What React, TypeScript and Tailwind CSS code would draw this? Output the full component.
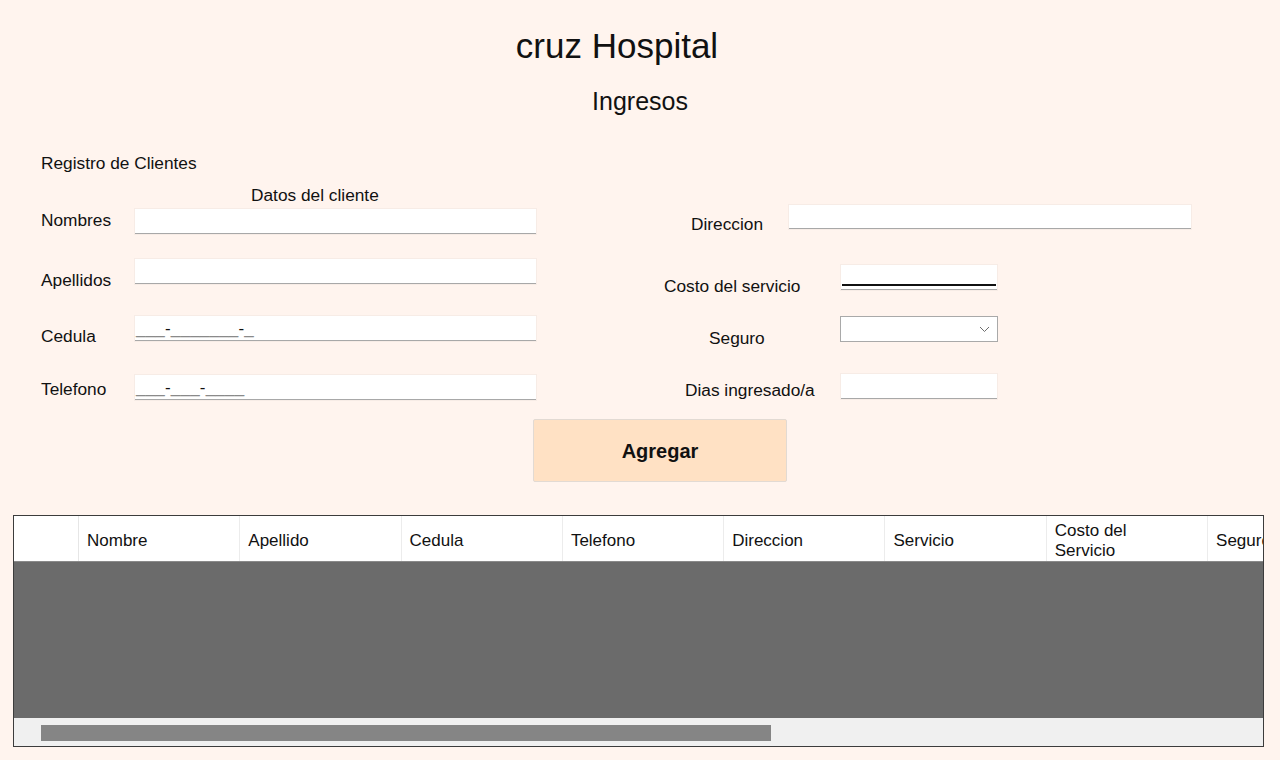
import React from "react";

const columns = ["Nombre", "Apellido", "Cedula", "Telefono", "Direccion", "Servicio", "Costo del Servicio", "Seguro"];

function TextBox({ className = "", children }: { className?: string; children?: React.ReactNode }) {
  return (
    <div className={`bg-white border-b border-[#a8a8a8] shadow-[0_0_0_1px_rgba(0,0,0,0.03)] ${className}`}>
      {children}
    </div>
  );
}

// masked prompt: underscores grey, separators dark
function Mask({ mask }: { mask: string }) {
  return (
    <div className="pl-[1px] pt-[3px] text-[17px] leading-[20px] tracking-[0.2px]">
      {mask.split("").map((ch, i) => (
        <span key={i} className={ch === "_" ? "text-[#8a8a8a]" : "text-[#111]"}>
          {ch}
        </span>
      ))}
    </div>
  );
}

export default function App() {
  return (
    <div
      className="h-[760px] w-[1280px] overflow-hidden bg-[#fff4ee] text-[#111]"
      style={{ fontFamily: '"Liberation Sans", Arial, sans-serif' }}
    >
      {/* Header */}
      <div className="pt-[26px] text-center">
        <h1 className="ml-[-46px] text-[35px] leading-[40px]">cruz Hospital</h1>
        <h2 className="mt-[20px] text-[25px] leading-[30px]">Ingresos</h2>
      </div>

      {/* Form */}
      <div className="mt-[37px] flex">
        {/* Left column */}
        <div className="w-[623px] pl-[41px] text-[17.3px] leading-[20px]">
          <div className="h-[20px]">Registro de Clientes</div>
          <div className="mt-[12px] h-[20px] pl-[210px]">Datos del cliente</div>

          <div className="mt-[4px] flex h-[25px] items-start">
            <span className="mt-[1px] w-[94px]">Nombres</span>
            <TextBox className="h-[25px] w-[401px]" />
          </div>
          <div className="mt-[25px] flex h-[25px] items-start">
            <span className="mt-[11px] w-[94px]">Apellidos</span>
            <TextBox className="h-[25px] w-[401px]" />
          </div>
          <div className="mt-[32px] flex h-[25px] items-start">
            <span className="mt-[10px] w-[94px]">Cedula</span>
            <TextBox className="h-[25px] w-[401px]">
              <Mask mask="___-_______-_" />
            </TextBox>
          </div>
          <div className="mt-[34px] flex h-[25px] items-start">
            <span className="mt-[4px] w-[94px]">Telefono</span>
            <TextBox className="h-[25px] w-[401px]">
              <Mask mask="___-___-____" />
            </TextBox>
          </div>
        </div>

        {/* Right column */}
        <div className="pl-[41px] text-[17.3px] leading-[20px]">
          <div className="mt-[52px] flex h-[24px] items-start">
            <span className="mt-[9px] w-[125px] pl-[27px]">Direccion</span>
            <TextBox className="h-[24px] w-[402px]" />
          </div>
          <div className="mt-[36px] flex h-[25px] items-start">
            <span className="mt-[11px] w-[177px]">Costo del servicio</span>
            <TextBox className="h-[25px] w-[156px]">
              <div className="mx-[1px] mt-[19px] h-[2px] bg-[#111]" />
            </TextBox>
          </div>
          <div className="mt-[26px] flex h-[26px] items-start">
            <span className="mt-[12px] w-[176px] pl-[45px]">Seguro</span>
            <div className="flex h-[26px] w-[158px] items-center justify-end border border-[#a9a9a9] bg-white pr-[7px]">
              <svg width="11" height="7" viewBox="0 0 11 7" fill="none">
                <polyline points="1,1 5.5,5.5 10,1" stroke="#6d6d6d" strokeWidth="1" />
              </svg>
            </div>
          </div>
          <div className="mt-[32px] flex h-[25px] items-start">
            <span className="mt-[6px] w-[177px] pl-[21px]">Dias ingresado/a</span>
            <TextBox className="h-[25px] w-[156px]" />
          </div>
        </div>
      </div>

      {/* Button */}
      <button className="ml-[533px] mt-[19px] block h-[63px] w-[254px] rounded-[2px] border border-[#e2dad3] bg-[#ffe1c4] text-[20px] font-bold">
        Agregar
      </button>

      {/* Grid */}
      <div className="ml-[13px] mt-[33px] flex h-[232px] w-[1251px] flex-col overflow-hidden border border-[#3c3c3c]">
        <div className="flex h-[46px] shrink-0 border-b border-[#8a8a8a] bg-white text-[17px] leading-[20px]">
          <div className="w-[65px] shrink-0 border-r border-[#e6e6e6]" />
          {columns.map((c) => (
            <div
              key={c}
              className="flex w-[161.3px] shrink-0 items-center border-r border-[#ececec] pl-[8px] pr-[30px] pt-[4px]"
            >
              {c}
            </div>
          ))}
        </div>
        <div className="flex-1 bg-[#6b6b6b]" />
        <div className="h-[28px] shrink-0 bg-[#f0f0f0] pl-[27px] pt-[7px]">
          <div className="h-[16px] w-[730px] bg-[#858585]" />
        </div>
      </div>
    </div>
  );
}
